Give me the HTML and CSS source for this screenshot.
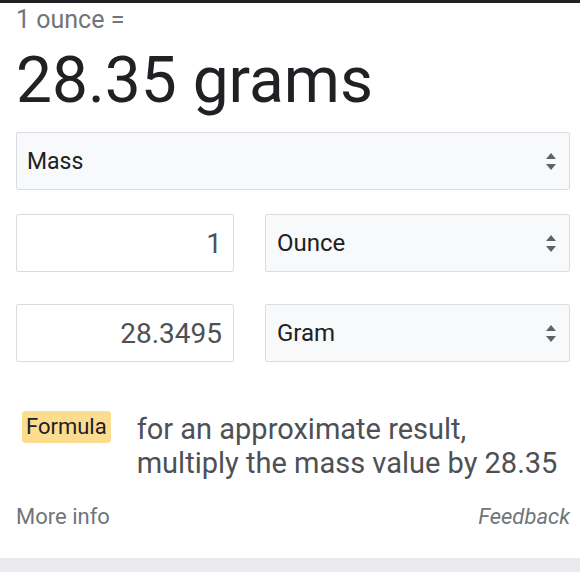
FILE: index.html
```html
<!DOCTYPE html>
<html lang="en">
  <head>
    <meta charset="UTF-8" />
    <meta name="viewport" content="width=device-width, initial-scale=1.0" />
    <title>ounce to gram</title>
    <link rel="stylesheet" href="styles.css">
  </head>
  <body>
    <div class="page">
      <div class="question">1 ounce =</div>
      <div class="answer">28.35 grams</div>

      <div class="field select wide">
        <span class="mass">Mass</span>
        <svg class="arrows" viewBox="0 0 10 17" width="10" height="17">
          <path d="M5 0 L10 6 H0 Z M0 11 H10 L5 17 Z" />
        </svg>
      </div>

      <div class="row">
        <div class="field input">1</div>
        <div class="field select">
          <span>Ounce</span>
          <svg class="arrows" viewBox="0 0 10 17" width="10" height="17">
            <path d="M5 0 L10 6 H0 Z M0 11 H10 L5 17 Z" />
          </svg>
        </div>
      </div>

      <div class="row second">
        <div class="field input">28.3495</div>
        <div class="field select">
          <span>Gram</span>
          <svg class="arrows" viewBox="0 0 10 17" width="10" height="17">
            <path d="M5 0 L10 6 H0 Z M0 11 H10 L5 17 Z" />
          </svg>
        </div>
      </div>

      <div class="formula">
        <span class="badge">Formula</span>
        <p class="formula-text">for an approximate result,<br>multiply the mass value by 28.35</p>
      </div>

      <div class="footer">
        <span>More info</span>
        <span class="feedback">Feedback</span>
      </div>
    </div>
    <div class="band"></div>
  </body>
</html>
```

FILE: styles.css
```css
* {
  padding: 0;
  margin: 0;
  box-sizing: border-box;
}
body {
  background: #fff;
  font-family: Roboto, "Liberation Sans", sans-serif;
  color: #202124;
  border-top: 3px solid #202124;
}
.page {
  padding: 0 10px 0 16px;
}
.question {
  font-size: 25px;
  line-height: 30px;
  padding-top: 2px;
  color: #70757a;
}
.answer {
  font-size: 64px;
  line-height: 76px;
  margin-top: 8px;
}
.field {
  height: 58px;
  border: 1px solid #dadce0;
  border-radius: 2px;
  display: flex;
  align-items: center;
  font-size: 24px;
}
.select {
  background: #f8f9fa;
  justify-content: space-between;
  padding: 0 13px 0 11px;
}
.wide {
  margin-top: 13px;
  padding-left: 10px;
}
.mass {
  font-size: 23px;
}
.input {
  background: #fff;
  justify-content: flex-end;
  padding-right: 11px;
  font-size: 28px;
  color: #4d5156;
}
.arrows {
  fill: #5f6368;
}
.row {
  display: grid;
  grid-template-columns: 218px 1fr;
  gap: 31px;
  margin-top: 24px;
}
.row.second {
  margin-top: 32px;
}
.formula {
  display: flex;
  align-items: flex-start;
  margin-top: 49px;
}
.badge {
  margin-left: 6px;
  background: #fcdd90;
  border-radius: 4px;
  font-size: 22px;
  line-height: 32px;
  padding: 0 4px;
  color: #202124;
}
.formula-text {
  margin-left: 26px;
  font-size: 29px;
  line-height: 34px;
  margin-top: 1px;
  color: #4d5156;
}
.footer {
  display: flex;
  justify-content: space-between;
  margin-top: 23px;
  font-size: 22px;
  line-height: 28px;
  color: #70757a;
}
.feedback {
  font-style: italic;
}
.band {
  height: 14px;
  margin-top: 27px;
  background: #e8eaed;
}
```
